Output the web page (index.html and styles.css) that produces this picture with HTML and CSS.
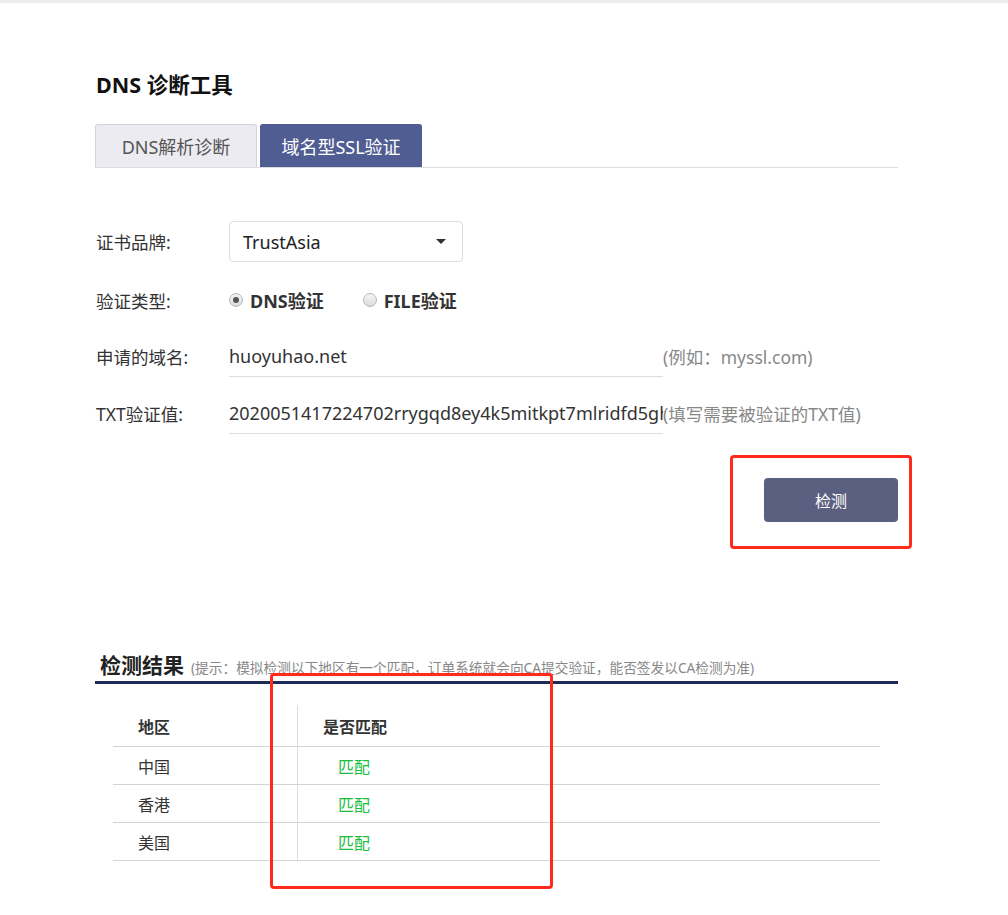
FILE: index.html
```html
<!DOCTYPE html>
<html lang="zh-CN">
<head>
<meta charset="utf-8">
<title>DNS 诊断工具</title>
<link rel="stylesheet" href="styles.css">
</head>
<body>
<div class="topbar"></div>
<main class="page">
  <h1 class="title">DNS 诊断工具</h1>
  <div class="tabs">
    <div class="tab">DNS解析诊断</div>
    <div class="tab active">域名型SSL验证</div>
  </div>

  <form class="form">
    <div class="row row-select">
      <label class="label">证书品牌:</label>
      <div class="select">
        <span>TrustAsia</span>
        <span class="caret"></span>
      </div>
    </div>
    <div class="row row-radio">
      <label class="label">验证类型:</label>
      <div class="radios">
        <span class="radio checked"><i class="dot"></i>DNS验证</span>
        <span class="radio"><i class="dot"></i>FILE验证</span>
      </div>
    </div>
    <div class="row row-input">
      <label class="label">申请的域名:</label>
      <div class="input">huoyuhao.net</div>
      <span class="hint">(例如：myssl.com)</span>
    </div>
    <div class="row row-input">
      <label class="label">TXT验证值:</label>
      <div class="input">2020051417224702rrygqd8ey4k5mitkpt7mlridfd5gh</div>
      <span class="hint">(填写需要被验证的TXT值)</span>
    </div>
    <div class="actions">
      <button type="button" class="btn">检测</button>
    </div>
  </form>

  <section class="results">
    <h2 class="results-head"><span class="results-title">检测结果</span><span class="results-tip">(提示：模拟检测以下地区有一个匹配，订单系统就会向CA提交验证，能否签发以CA检测为准)</span></h2>
    <div class="table">
      <div class="tr th"><div class="c1">地区</div><div class="c2">是否匹配</div></div>
      <div class="tr"><div class="c1">中国</div><div class="c2 ok">匹配</div></div>
      <div class="tr"><div class="c1">香港</div><div class="c2 ok">匹配</div></div>
      <div class="tr"><div class="c1">美国</div><div class="c2 ok">匹配</div></div>
    </div>
  </section>
</main>
<div class="mark mark-btn"></div>
<div class="mark mark-col"></div>
</body>
</html>
```

FILE: styles.css
```css
* { box-sizing: border-box; }
html, body { margin: 0; padding: 0; background: #fff; }
body {
  font-family: "Noto Sans", "Noto Sans CJK SC", sans-serif;
  color: #333;
  position: relative;
  min-height: 915px;
}
.topbar { height: 3px; background: #ececec; }
.page { width: 803px; margin-left: 95px; }

.title {
  margin: 68px 0 0 1px;
  font-size: 21.5px;
  line-height: 28px;
  font-weight: 700;
  color: #111;
}
.tabs {
  display: flex;
  gap: 3px;
  margin-top: 25px;
  border-bottom: 1px solid #dcdce2;
  height: 44px;
}
.tab {
  width: 162px;
  height: 43px;
  display: flex;
  align-items: center;
  justify-content: center;
  font-size: 18px;
  color: #555;
  background: #ebebf1;
  border: 1px solid #d2d2de;
  border-bottom: none;
  border-radius: 3px 3px 0 0;
}
.tab.active {
  background: #505d92;
  border-color: #505d92;
  color: #fff;
}

.form { margin-top: 53px; }
.row { display: flex; align-items: center; }
.label { width: 134px; font-size: 17.5px; color: #333; flex: none; padding-left: 1px; }
.row-select { height: 41px; }
.select {
  width: 234px;
  height: 41px;
  border: 1px solid #dddddd;
  border-radius: 4px;
  display: flex;
  align-items: center;
  justify-content: space-between;
  padding: 0 16px 0 13px;
  font-size: 18px;
  color: #222;
}
.caret {
  width: 0; height: 0;
  border-left: 5px solid transparent;
  border-right: 5px solid transparent;
  border-top: 5px solid #333;
}
.row-radio { height: 40px; margin-top: 18px; }
.radios { display: flex; gap: 39px; }
.radio {
  display: flex;
  align-items: center;
  font-size: 18px;
  font-weight: 700;
  color: #333;
}
.dot {
  width: 14px; height: 14px;
  border-radius: 50%;
  border: 1px solid #b8b8b8;
  background: linear-gradient(#f4f4f4, #dcdcdc);
  margin-right: 7px;
  position: relative;
}
.radio.checked .dot::after {
  content: "";
  position: absolute;
  left: 3px; top: 3px;
  width: 6px; height: 6px;
  border-radius: 50%;
  background: #555;
}
.row-input { height: 41px; margin-top: 16px; }
.input {
  width: 434px;
  height: 41px;
  border-bottom: 1px solid #dddddd;
  display: flex;
  align-items: center;
  font-size: 18px;
  color: #333;
  white-space: nowrap;
  overflow: hidden;
  flex: none;
}
.hint { font-size: 17.5px; color: #888; white-space: nowrap; }

.actions { display: flex; justify-content: flex-end; margin-top: 44px; }
.btn {
  width: 134px;
  height: 44px;
  border: none;
  border-radius: 4px;
  background: #5c6080;
  color: #fff;
  font-family: inherit;
  font-size: 16px;
}

.results { margin-top: 129px; }
.results-head {
  margin: 0;
  padding: 0 0 2px 5px;
  height: 33px;
  border-bottom: 3px solid #1f2b57;
  display: flex;
  align-items: baseline;
  gap: 7px;
  line-height: 28px;
}
.results-title { font-size: 21px; font-weight: 700; color: #222; }
.results-tip { font-size: 13.7px; font-weight: 400; color: #888; white-space: nowrap; }

.table { margin: 21px 18px 0; }
.tr {
  display: flex;
  height: 38px;
  border-bottom: 1px solid #d4d4d4;
  font-size: 16px;
  color: #333;
}
.tr.th { height: 42px; font-weight: 700; }
.c1 {
  width: 185px;
  padding-left: 25px;
  display: flex;
  align-items: center;
  border-right: 1px solid #dddddd;
}
.c2 { padding-left: 25px; display: flex; align-items: center; }
.c2.ok { padding-left: 40px; color: #18be3c; }

.mark {
  position: absolute;
  border: 3px solid #ff2a1a;
  border-radius: 4px;
  pointer-events: none;
}
.mark-btn { left: 730px; top: 455px; width: 182px; height: 94px; }
.mark-col { left: 270px; top: 673px; width: 283px; height: 216px; }
```
